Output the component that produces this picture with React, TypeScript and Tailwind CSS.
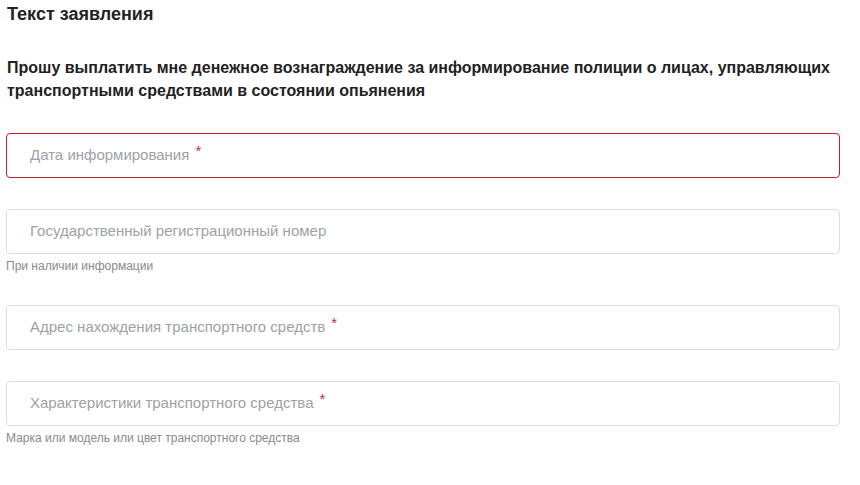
import React from 'react';

type Field = {
  label: string;
  required?: boolean;
  hint?: string;
  error?: boolean;
};

const fields: Field[] = [
  { label: 'Дата информирования', required: true, error: true },
  { label: 'Государственный регистрационный номер', hint: 'При наличии информации' },
  { label: 'Адрес нахождения транспортного средств', required: true },
  {
    label: 'Характеристики транспортного средства',
    required: true,
    hint: 'Марка или модель или цвет транспортного средства',
  },
];

function FormField({ field }: { field: Field }) {
  return (
    <div className="mb-[31px]">
      <div
        className={`h-[45px] rounded-[4px] border bg-white flex items-center pl-[23px] ${
          field.error ? 'border-[#c41f2f]' : 'border-[#dcdee0]'
        }`}
      >
        <span className="text-[15px] text-[#9da2a7]">{field.label}</span>
        {field.required && (
          <span className="ml-[6px] -mt-[10px] text-[15px] leading-none text-[#d0283a]">*</span>
        )}
      </div>
      {field.hint && (
        <div className="mt-[5px] -mb-[20px] h-[15px] text-[12px] leading-[15px] text-[#888b8e]">
          {field.hint}
        </div>
      )}
    </div>
  );
}

export default function App() {
  return (
    <div
      className="min-h-screen bg-white pl-[6px] pr-[20px] text-[#222]"
      style={{ fontFamily: '"Liberation Sans", Arial, sans-serif' }}
    >
      <h2 className="pt-[4px] pl-px text-[18px] leading-[20px] font-bold text-[#222]">Текст заявления</h2>

      <p className="mt-[32px] pl-px text-[16px] leading-[23px] font-bold text-[#222]">
        Прошу выплатить мне денежное вознаграждение за информирование полиции о лицах, управляющих
        транспортными средствами в состоянии опьянения
      </p>

      <div className="mt-[31px]">
        {fields.map((f, i) => (
          <div key={i} className={f.hint ? 'pb-[20px]' : ''}>
            <FormField field={f} />
          </div>
        ))}
      </div>
    </div>
  );
}
